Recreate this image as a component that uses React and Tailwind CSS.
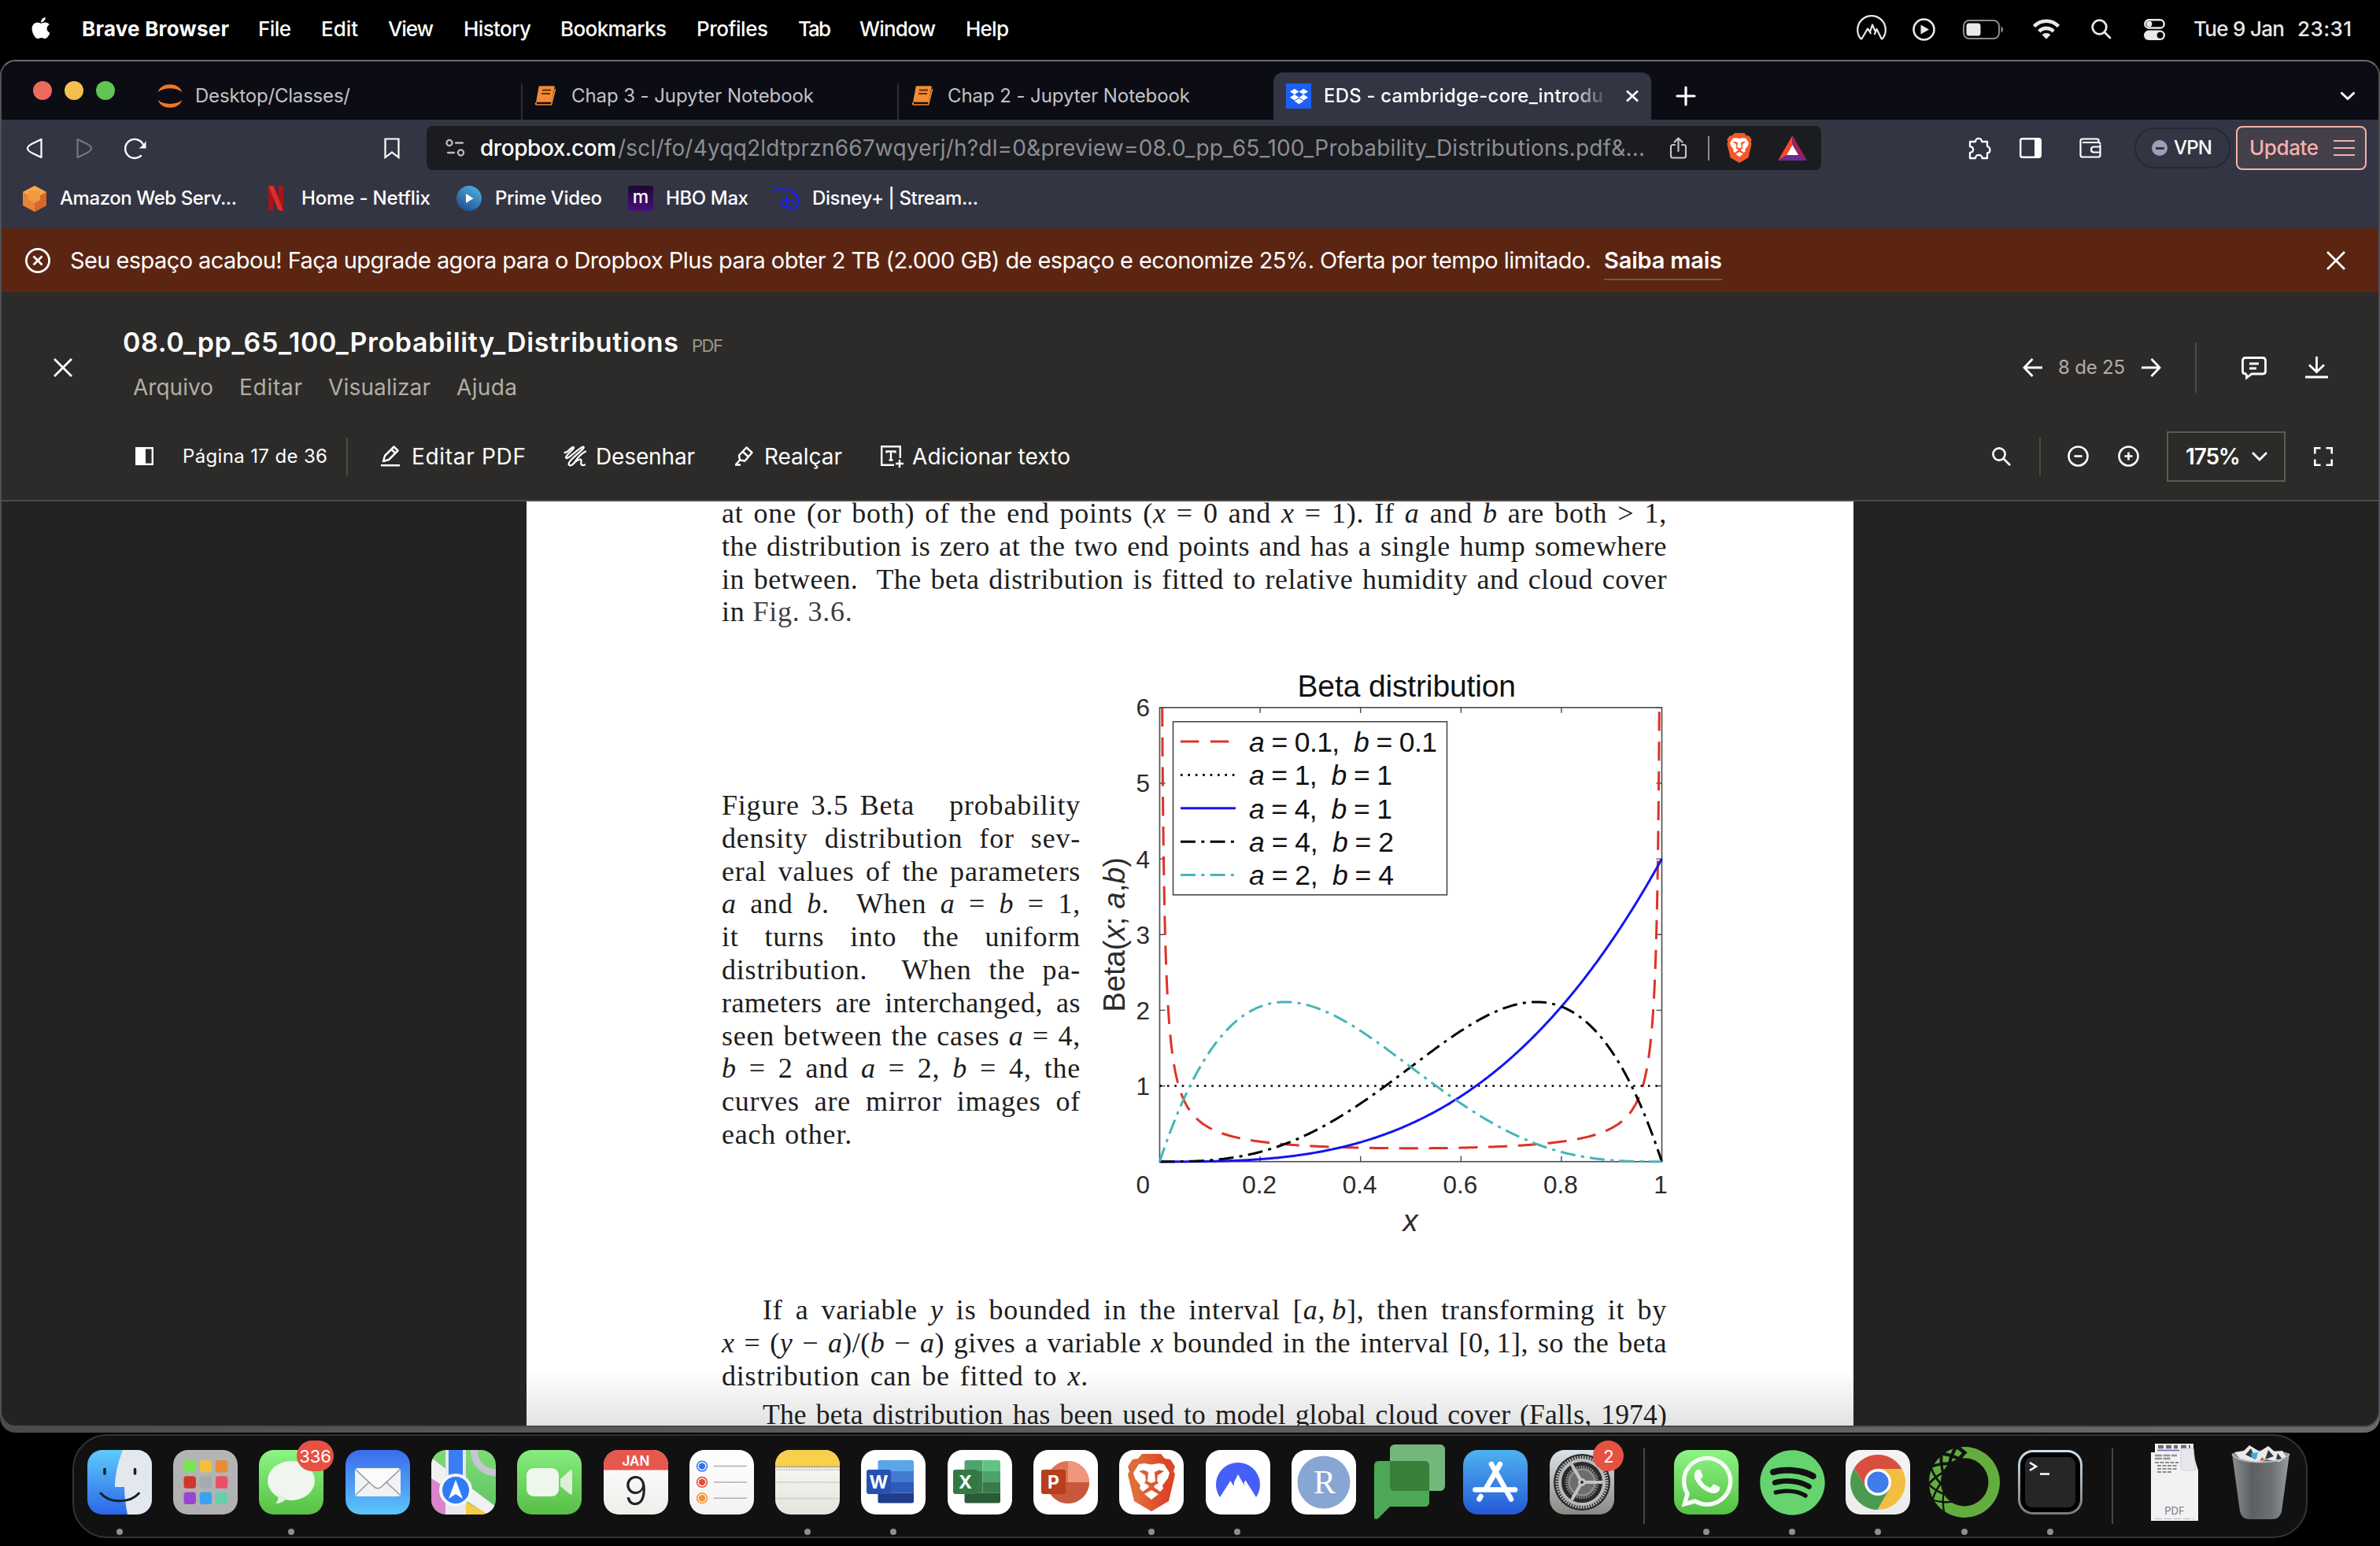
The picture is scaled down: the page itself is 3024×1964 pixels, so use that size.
import React, { useLayoutEffect, useRef } from "react";
import { FaApple, FaDropbox, FaSpotify, FaWhatsapp } from "react-icons/fa";
import { SiAnaconda } from "react-icons/si";

/* Spreads its letters so that the text fills the box it is given. */
function Fit({ className = "", children }) {
  const box = useRef(null);
  const text = useRef(null);
  useLayoutEffect(() => {
    const t = text.current;
    t.style.letterSpacing = "0px";
    const n = Math.max(1, t.textContent.length - 1);
    const gap = (box.current.clientWidth - t.getBoundingClientRect().width) / n;
    t.style.letterSpacing = gap.toFixed(3) + "px";
  }, []);
  return (
    <span ref={box} className={"inline-block shrink-0 whitespace-nowrap " + className}>
      <span ref={text}>{children}</span>
    </span>
  );
}

function Svg({ w, h, className = "", vb, children, ...rest }) {
  return (
    <svg
      width={w}
      height={h}
      viewBox={vb || `0 0 ${w} ${h}`}
      fill="none"
      className={"block shrink-0 overflow-visible " + className}
      {...rest}
    >
      {children}
    </svg>
  );
}

/* ---------- macOS menu bar ---------- */
function MenuBar() {
  return (
    <div className="flex h-[74px] items-center bg-black pl-[38px] text-[26px] leading-none font-medium text-white">
      <FaApple className="mb-[3px] h-[31px] w-[28px] shrink-0" />
      <Fit className="ml-[38px] w-[187px] font-bold">Brave Browser</Fit>
      <Fit className="ml-[37px] w-[42px]">File</Fit>
      <Fit className="ml-[38px] w-[47px]">Edit</Fit>
      <Fit className="ml-[38px] w-[58px]">View</Fit>
      <Fit className="ml-[38px] w-[86px]">History</Fit>
      <Fit className="ml-[37px] w-[135px]">Bookmarks</Fit>
      <Fit className="ml-[38px] w-[91px]">Profiles</Fit>
      <Fit className="ml-[38px] w-[42px]">Tab</Fit>
      <Fit className="ml-[36px] w-[97px]">Window</Fit>
      <Fit className="ml-[38px] w-[55px]">Help</Fit>
      <div className="ml-auto flex items-center pr-[36px] text-[#e9e9e9]">
        <Svg w={38} h={30} stroke="currentColor" strokeWidth="2.2" strokeLinejoin="round">
          <path d="M6 28 A17.8 17.8 0 1 1 32 28" />
          <path d="M6 28 L14 14.5 L17 18.5 L20 9.5 L24 18.5 L25.5 15 L32 28 M17 18.5 L18 21 M24 18.5 L22.5 22" />
        </Svg>
        <Svg w={29} h={29} className="ml-[33px]">
          <circle cx="14.5" cy="14.5" r="13" stroke="currentColor" strokeWidth="2.6" />
          <path d="M10.5 8.5 V20.5 L21 14.5 Z" fill="currentColor" />
        </Svg>
        <Svg w={52} h={25} className="ml-[35px]">
          <rect x="1" y="1" width="45" height="23" rx="7" stroke="#8b8b8b" strokeWidth="2" />
          <rect x="4.5" y="4.5" width="18" height="16" rx="3.5" fill="currentColor" />
          <path d="M48.5 8.5 C52 10 52 15 48.5 16.5 Z" fill="#8b8b8b" />
        </Svg>
        <Svg w={36} h={26} className="ml-[36px]">
          <path d="M2.5 9.5 C11 0.5 25 0.5 33.5 9.5" stroke="currentColor" strokeWidth="4.6" />
          <path d="M8.8 15.8 C14 10.6 22 10.6 27.2 15.8" stroke="currentColor" strokeWidth="4.6" />
          <path d="M12.6 20 C15.5 17.2 20.5 17.2 23.4 20 L18 25.8 Z" fill="currentColor" />
        </Svg>
        <Svg w={26} h={26} className="ml-[39px]" stroke="currentColor" strokeWidth="2.8" strokeLinecap="round">
          <circle cx="10.5" cy="10.5" r="8.8" />
          <path d="M17 17 L24 24" />
        </Svg>
        <Svg w={27} h={27} className="ml-[41px]">
          <rect x="1.3" y="1.3" width="24.4" height="10.2" rx="5.1" stroke="currentColor" strokeWidth="2.4" />
          <circle cx="6.8" cy="6.4" r="3.6" fill="currentColor" />
          <rect x="0" y="14.6" width="27" height="12.4" rx="6.2" fill="currentColor" />
          <circle cx="20.6" cy="20.8" r="4" fill="#000" />
        </Svg>
        <Fit className="ml-[36px] w-[116px]">Tue 9 Jan</Fit>
        <Fit className="ml-[16px] w-[69px]">23:31</Fit>
      </div>
    </div>
  );
}

/* ---------- browser chrome ---------- */
function NotebookIcon({ className }) {
  return (
    <Svg w={28} h={25} className={className}>
      <path d="M6.5 1 H25 L21 20 H3 Z" fill="#f38b35" stroke="#f38b35" strokeWidth="1.6" strokeLinejoin="round" />
      <path d="M10 5.5 H21 M9 10 H20" stroke="#5b3009" strokeWidth="2" />
      <path d="M3 21.6 C1 21.6 1 24 3 24 H21.5 L26.6 4" stroke="#f38b35" strokeWidth="1.6" />
    </Svg>
  );
}

function TabStrip() {
  return (
    <div className="flex h-[74px] items-end bg-[#0c0c14] text-[24px] leading-none text-[#c3c3c6]">
      <div className="mb-[25px] ml-[40px] flex gap-[16px]">
        <div className="size-[24px] rounded-full bg-[#ed6a5e]" />
        <div className="size-[24px] rounded-full bg-[#f5bf4f]" />
        <div className="size-[24px] rounded-full bg-[#61c554]" />
      </div>
      <div className="flex h-[46px] w-[518px] items-center border-r-2 border-[#2c2d37] pb-[15px] pl-[54px] pt-0">
        <Svg w={32} h={30}>
          <path d="M0.5 10 C5 -3 27 -3 31.5 10 C24 3.5 8 3.5 0.5 10 Z" fill="#f37726" />
          <path d="M0.5 20 C5 33 27 33 31.5 20 C24 26.5 8 26.5 0.5 20 Z" fill="#f37726" />
        </Svg>
        <Fit className="ml-[16px] w-[197px]">Desktop/Classes/</Fit>
      </div>
      <div className="flex h-[46px] w-[478px] items-center border-r-2 border-[#2c2d37] pb-[15px] pl-[15px]">
        <NotebookIcon />
        <Fit className="ml-[19px] w-[308px]">Chap 3 - Jupyter Notebook</Fit>
      </div>
      <div className="flex h-[46px] w-[476px] items-center pb-[15px] pl-[16px]">
        <NotebookIcon />
        <Fit className="ml-[18px] w-[308px]">Chap 2 - Jupyter Notebook</Fit>
      </div>
      <div className="flex h-[60px] w-[480px] items-center rounded-t-[12px] bg-[#333543] pl-[16px] text-white">
        <div className="flex size-[32px] items-center justify-center bg-[#1d60f5]">
          <FaDropbox className="size-[23px]" />
        </div>
        <Fit className="ml-[16px] w-[355px] font-medium [mask-image:linear-gradient(to_right,#000_88%,rgba(0,0,0,0.15)_100%)] py-[4px]">
          EDS - cambridge-core_introdu
        </Fit>
        <Svg w={16} h={14} className="ml-[29px]" stroke="#fff" strokeWidth="2.6">
          <path d="M1 0.5 L15 13.5 M15 0.5 L1 13.5" />
        </Svg>
      </div>
      <Svg w={24} h={24} className="mb-[18px] ml-[32px]" stroke="#fff" strokeWidth="3.2" strokeLinecap="round">
        <path d="M12 1 V23 M1 12 H23" />
      </Svg>
      <Svg w={20} h={12} className="mb-[24px] mr-[29px] ml-auto" stroke="#fff" strokeWidth="3">
        <path d="M1.5 1.5 L10 9.5 L18.5 1.5" />
      </Svg>
    </div>
  );
}

function UrlRow() {
  return (
    <div className="flex h-[72px] items-center bg-[#333543] leading-none text-white">
      <Svg w={22} h={27} className="ml-[30px]" stroke="#fff" strokeWidth="2.2" strokeLinejoin="round">
        <path d="M20.5 2 V25 L9 19.5 C1 15.5 1 11.5 9 7.5 Z" />
      </Svg>
      <Svg w={22} h={27} className="ml-[43px]" stroke="#74757e" strokeWidth="2.2" strokeLinejoin="round">
        <path d="M1.5 2 V25 L13 19.5 C21 15.5 21 11.5 13 7.5 Z" />
      </Svg>
      <Svg w={28} h={27} className="ml-[39px]">
        <path d="M21 23 A12 12 0 1 1 24.5 10" stroke="#fff" strokeWidth="2.4" strokeLinecap="round" />
        <path d="M27.5 4 V13.5 H18.5 C21 12 24.5 9 27.5 4 Z" fill="#fff" />
      </Svg>
      <Svg w={20} h={27} className="ml-[302px]" stroke="#fff" strokeWidth="2.2">
        <path d="M1.5 1.5 H18.5 V25 L10 18.5 L1.5 25 Z" />
      </Svg>
      <div className="ml-[34px] flex h-[56px] w-[1772px] items-center rounded-[8px] bg-[#1b1c20] pl-[24px]">
        <Svg w={25} h={24} stroke="#b9babd" strokeWidth="2.3" strokeLinecap="round">
          <circle cx="5" cy="5.5" r="3.6" />
          <path d="M13 5.5 H22" />
          <circle cx="19.5" cy="18" r="3.6" />
          <path d="M3 18 H11" />
        </Svg>
        <Fit className="ml-[19px] w-[173px] text-[28px] font-medium">dropbox.com</Fit>
        <Fit className="ml-[2px] w-[1305px] text-[28px] text-[#8d8e93]">
          /scl/fo/4yqq2ldtprzn667wqyerj/h?dl=0&amp;preview=08.0_pp_65_100_Probability_Distributions.pdf&amp;...
        </Fit>
        <Svg w={21} h={28} className="ml-[32px]" stroke="#c6c6c9" strokeWidth="2.1" strokeLinecap="round" strokeLinejoin="round">
          <path d="M6 10 H3.5 Q1 10 1 12.5 V24 Q1 26.5 3.5 26.5 H17.5 Q20 26.5 20 24 V12.5 Q20 10 17.5 10 H15" />
          <path d="M10.5 18 V1.5 M5.5 6.5 L10.5 1.5 L15.5 6.5" />
        </Svg>
        <div className="ml-[27px] h-[31px] w-[2px] bg-[#8a8b90]" />
        <BraveLion className="ml-[21px]" />
        <Svg w={37} h={32} className="ml-[32px]">
          <path d="M18.5 0 L0 32 L11 25 L18.5 12 Z" fill="#ff4724" />
          <path d="M18.5 0 L37 32 L26 25 L18.5 12 Z" fill="#9e1f63" />
          <path d="M0 32 H37 L26 25 H11 Z" fill="#662d91" />
          <path d="M18.5 12 L11 25 H26 Z" fill="#fff" />
        </Svg>
      </div>
      <Svg w={28} h={29} className="ml-[187px]" stroke="#fff" strokeWidth="2.3" strokeLinejoin="round">
        <path d="M2 6 H9 C9 0.5 17 0.5 17 6 H24 V12 C28.5 13 28.5 20 24 20.5 V27 H17.5 C17.5 21.5 9 21.5 9 27 H2 V20 C7.5 19 7.5 13 2 12 Z" />
      </Svg>
      <Svg w={28} h={26} className="ml-[37px]">
        <rect x="1.2" y="1.2" width="25.6" height="23.6" rx="2.5" stroke="#fff" strokeWidth="2.4" />
        <path d="M19 1 H25.5 Q27 1 27 3 V23 Q27 25 25.5 25 H19 Z" fill="#fff" />
      </Svg>
      <Svg w={28} h={26} className="ml-[48px]" stroke="#fff" strokeWidth="2.2" strokeLinejoin="round">
        <path d="M26.5 9 V22 Q26.5 24.5 24 24.5 H4 Q1.5 24.5 1.5 22 V4 Q1.5 1.5 4 1.5 H22.5 Q24.5 1.5 24.5 3.5 V6 H4" />
        <path d="M24.5 6 Q26.5 6 26.5 8.5" />
        <path d="M26.5 11.5 H18.5 Q15 11.5 15 15 Q15 18.5 18.5 18.5 H26.5" />
      </Svg>
      <div className="ml-[42px] flex h-[52px] w-[122px] items-center rounded-full border-2 border-[#262832] pl-[20px]">
        <div className="flex size-[20px] items-center justify-center rounded-full bg-[#9e9fb5]">
          <div className="h-[3px] w-[11px] bg-[#333543]" />
        </div>
        <Fit className="ml-[8px] w-[49px] text-[24px] font-medium">VPN</Fit>
      </div>
      <div className="ml-[7px] flex h-[56px] w-[166px] items-center rounded-[8px] border-2 border-[#f5b1aa] bg-[#433f4b] pl-[15px] text-[#f5b1aa]">
        <Fit className="w-[88px] text-[26px] font-medium">Update</Fit>
        <div className="ml-[19px] flex w-[27px] flex-col gap-[7px]">
          <div className="h-[2px] bg-[#f5b1aa]" />
          <div className="h-[2px] bg-[#f5b1aa]" />
          <div className="h-[2px] bg-[#f5b1aa]" />
        </div>
      </div>
    </div>
  );
}

function BraveLion({ className }) {
  return (
    <Svg w={34} h={38} vb="0 0 62 73" className={className}>
      <path d="M19 0 H43 L48 6 L55 7 L61 16 L59 22 L61 26 L53 60 L31 73 L9 60 L1 26 L3 22 L1 16 L7 7 L14 6 Z" fill="#f4582a" />
      <LionFace />
    </Svg>
  );
}

function LionFace() {
  return (
    <g>
      <path
        d="M31 13.5 L40 12 L47 13 L54 24 L52 31 L45 40 L46 44 L42 48 L34 42 L35 40 L40 37 L38 34 L39 27 L47 22 L41 20.5 L35 23 L36 35 L31 37 L26 35 L27 23 L21 20.5 L15 22 L23 27 L24 34 L22 37 L27 40 L28 42 L20 48 L16 44 L17 40 L10 31 L8 24 L15 13 L22 12 Z"
        fill="#fff"
      />
      <path d="M31 46 L40 51 L31 58 L22 51 Z" fill="#fff" />
    </g>
  );
}

function BookmarksRow() {
  return (
    <div className="flex h-[66px] items-center bg-[#333543] pb-[10px] pl-[27px] text-[24px] leading-none font-medium text-white">
      <Svg w={30} h={33}>
        <path d="M15 0 L30 8 V25 L15 33 L0 25 V8 Z" fill="#e8833a" />
        <path d="M15 0 L30 8 L15 16 L0 8 Z" fill="#f7a94f" />
        <path d="M15 16 L30 8 V25 L15 33 Z" fill="#d9662c" />
        <path d="M7 6 L22 6 L22 18 L15 22 L7 18 Z" fill="#f2993f" />
      </Svg>
      <Fit className="ml-[17px] w-[225px]">Amazon Web Serv...</Fit>
      <Svg w={19} h={32} className="ml-[40px]">
        <path d="M0 0 H6.5 V32 L0 31 Z M12.5 0 H19 V32 L12.5 31 Z" fill="#a81419" />
        <path d="M0 0 H6.5 L19 32 L12.5 31 Z" fill="#e12b28" />
      </Svg>
      <Fit className="ml-[23px] w-[164px]">Home - Netflix</Fit>
      <Svg w={32} h={32} className="ml-[33px]">
        <defs>
          <linearGradient id="prime" x1="0.8" y1="0" x2="0.2" y2="1">
            <stop offset="0" stopColor="#4fb0e2" />
            <stop offset="1" stopColor="#1c4b8e" />
          </linearGradient>
        </defs>
        <circle cx="16" cy="16" r="16" fill="url(#prime)" />
        <path d="M12 10 V22 L21.5 16 Z" fill="#fff" />
      </Svg>
      <Fit className="ml-[17px] w-[136px]">Prime Video</Fit>
      <div className="ml-[33px] flex size-[32px] items-center justify-center rounded-[3px] bg-linear-to-b from-[#1c0833] to-[#48107a] pb-[3px] text-[23px] font-medium">
        m
      </div>
      <Fit className="ml-[16px] w-[105px]">HBO Max</Fit>
      <Svg w={34} h={28} className="ml-[32px]" stroke="#1f22e6" strokeLinecap="round">
        <path d="M2 5 C5 -1 18 0 27 8 C35 16 33 27 22 26 C12 26 6 20 12 17 C17 15 24 16 27 19" strokeWidth="2.6" />
        <path d="M17 10 C16 15 16 21 17.5 26" strokeWidth="2.8" />
      </Svg>
      <Fit className="ml-[15px] w-[211px]">Disney+ | Stream...</Fit>
    </div>
  );
}

/* ---------- Dropbox viewer ---------- */
function Banner() {
  return (
    <div className="flex h-[81px] items-center bg-[#5b2512] pl-[30px] text-[29px] leading-none text-white">
      <Svg w={32} h={32} stroke="#fff" strokeWidth="2.8">
        <circle cx="16" cy="16" r="14.6" />
        <path d="M10.5 10.5 L21.5 21.5 M21.5 10.5 L10.5 21.5" />
      </Svg>
      <Fit className="ml-[25px] w-[1933px]">
        Seu espaço acabou! Faça upgrade agora para o Dropbox Plus para obter 2 TB (2.000 GB) de espaço e economize 25%. Oferta por tempo limitado.
      </Fit>
      <div className="mt-[4px] ml-[16px] flex h-[46px] items-center border-b-2 border-[#6d5a52] pb-[2px]">
        <Fit className="w-[150px] font-semibold">Saiba mais</Fit>
      </div>
      <Svg w={24} h={24} className="mr-[42px] ml-auto" stroke="#fff" strokeWidth="2.8">
        <path d="M1 1 L23 23 M23 1 L1 23" />
      </Svg>
    </div>
  );
}

function ViewerHeader() {
  return (
    <div className="flex h-[162px] items-start bg-[#2c2b29] leading-none text-white">
      <Svg w={24} h={24} className="mt-[84px] ml-[66px]" stroke="#fff" strokeWidth="2.8">
        <path d="M1 1 L23 23 M23 1 L1 23" />
      </Svg>
      <div className="ml-[64px] flex flex-col">
        <div className="mt-[48px] flex h-[32px] items-center">
          <Fit className="w-[706px] text-[34px] font-semibold">08.0_pp_65_100_Probability_Distributions</Fit>
          <Fit className="mt-[7px] ml-[17px] w-[40px] text-[22px] text-[#9b978f]">PDF</Fit>
        </div>
        <div className="mt-[25px] flex h-[32px] items-center pl-[13px] text-[28px] text-[#b3aea5]">
          <Fit className="w-[102px]">Arquivo</Fit>
          <Fit className="ml-[33px] w-[80px]">Editar</Fit>
          <Fit className="ml-[33px] w-[130px]">Visualizar</Fit>
          <Fit className="ml-[33px] w-[77px]">Ajuda</Fit>
        </div>
      </div>
      <div className="mt-[64px] mr-[64px] ml-auto flex h-[64px] items-center">
        <Svg w={25} h={24} stroke="#fff" strokeWidth="2.8">
          <path d="M2 12 H25 M12.5 1 L2 12 L12.5 23" />
        </Svg>
        <Fit className="ml-[20px] w-[85px] text-[24px] text-[#b3aea5]">8 de 25</Fit>
        <Svg w={25} h={24} className="ml-[21px]" stroke="#fff" strokeWidth="2.8">
          <path d="M0 12 H23 M12.5 1 L23 12 L12.5 23" />
        </Svg>
        <div className="ml-[43px] h-[64px] w-[2px] bg-[#4c4b48]" />
        <Svg w={32} h={28} className="ml-[57px]" stroke="#fff" strokeWidth="2.8">
          <path d="M6.5 22.5 V27 L13 22 H27 Q30.5 22 30.5 18.5 V5 Q30.5 1.5 27 1.5 H5 Q1.5 1.5 1.5 5 V18.5 Q1.5 22 5 22 H6.5" />
          <path d="M10 9 H22 M10 15 H19" />
        </Svg>
        <Svg w={29} h={28} className="ml-[49px]" stroke="#fff" strokeWidth="2.8">
          <path d="M14.5 0 V19 M5 10.5 L14.5 19.5 L24 10.5 M0 26 H29" />
        </Svg>
      </div>
    </div>
  );
}

function ViewerToolbar() {
  return (
    <div className="flex h-[104px] items-center border-b-2 border-[#4c4b49] bg-[#2c2b29] pb-[9px] pl-[170px] text-[28px] leading-none text-white">
      <Svg w={23} h={23}>
        <rect x="1.2" y="1.2" width="20.6" height="20.6" stroke="#fff" strokeWidth="2.4" />
        <rect x="1" y="1" width="12" height="21" fill="#fff" />
      </Svg>
      <Fit className="ml-[37px] w-[184px] text-[24px]">Página 17 de 36</Fit>
      <div className="ml-[24px] h-[48px] w-[2px] bg-[#4c4b48]" />
      <Svg w={24} h={27} className="ml-[42px]" stroke="#fff" strokeWidth="2.5" strokeLinejoin="round">
        <path d="M3 20 L5 13 L16.5 1.5 L21.5 6.5 L10 18 Z M13.5 5 L18 9.5" />
        <path d="M0 25.2 H24" />
      </Svg>
      <Fit className="ml-[15px] w-[145px]">Editar PDF</Fit>
      <Svg w={29} h={28} className="ml-[48px]" stroke="#fff" strokeWidth="2.3" strokeLinejoin="round" strokeLinecap="round">
        <path d="M1.5 9 C6 9 8.5 2.5 12.5 2 C16 3 2.5 12 3 15.5 C5 19 17 4.5 25 1.5 C30 3 6 18 6.5 23.5 C8 27.5 12 24 14 21.5" />
        <path d="M14 21.5 C18 15 22 10.5 28 7.5 M14 21.5 C18 17.5 23.5 16 22.5 20 C21.5 24 22.5 26 27 24.5" />
      </Svg>
      <Fit className="ml-[12px] w-[126px]">Desenhar</Fit>
      <Svg w={24} h={25} className="ml-[50px]" stroke="#fff" strokeWidth="2.4" strokeLinejoin="round">
        <path d="M7 17.5 L6 11.5 L15.5 1.5 L22.5 8 L13.5 18.5 L7 17.5 L2 23 M10.5 6.5 L18 13.5 M1 23.5 H8" />
      </Svg>
      <Fit className="ml-[14px] w-[99px]">Realçar</Fit>
      <Svg w={28} h={28} className="ml-[49px]" stroke="#fff" strokeWidth="2.4">
        <path d="M17 24.8 H1.2 V1.2 H24.8 V16" />
        <path d="M7.5 9.5 V7.5 H18.5 V9.5 M13 7.5 V18.5 M10.5 18.5 H15.5" />
        <path d="M24 18 V28 M19 23 H29" />
      </Svg>
      <Fit className="ml-[12px] w-[201px]">Adicionar texto</Fit>
      <div className="mr-[58px] ml-auto flex items-center">
        <Svg w={24} h={24} stroke="#fff" strokeWidth="2.6">
          <circle cx="9" cy="9" r="7.6" />
          <path d="M14.5 14.5 L23 23" />
        </Svg>
        <div className="ml-[36px] h-[48px] w-[2px] bg-[#4c4b48]" />
        <Svg w={27} h={27} className="ml-[34px]" stroke="#fff" strokeWidth="2.6">
          <circle cx="13.5" cy="13.5" r="12" />
          <path d="M8.5 13.5 H18.5" />
        </Svg>
        <Svg w={27} h={27} className="ml-[37px]" stroke="#fff" strokeWidth="2.6">
          <circle cx="13.5" cy="13.5" r="12" />
          <path d="M8.5 13.5 H18.5 M13.5 8.5 V18.5" />
        </Svg>
        <div className="ml-[35px] flex h-[64px] w-[151px] items-center border-2 border-[#5c5a55] pl-[22px]">
          <Fit className="w-[70px] text-[28px] font-semibold">175%</Fit>
          <Svg w={20} h={12} className="ml-[14px]" stroke="#fff" strokeWidth="2.8">
            <path d="M1 1 L10 10 L19 1" />
          </Svg>
        </div>
        <Svg w={24} h={24} className="ml-[36px]" stroke="#fff" strokeWidth="2.6">
          <path d="M1.3 8.5 V1.3 H8.5 M15.5 1.3 H22.7 V8.5 M22.7 15.5 V22.7 H15.5 M8.5 22.7 H1.3 V15.5" />
        </Svg>
      </div>
    </div>
  );
}

/* ---------- PDF page ---------- */
function Line({ children, tight, className = "" }) {
  return (
    <p
      className={
        "h-[41.8px] leading-[41.8px] whitespace-nowrap [text-align-last:justify] " +
        (tight ? "tracking-[0.45px] " : "tracking-[0.8px] ") +
        className
      }
    >
      {children}
    </p>
  );
}

const X0 = 83.5;
const X1 = 721.5;
const Y0 = 615.7;
const TOP = 38.8;
const UNIT = 96.15;

function curve(fn, from = 0, to = 1, n = 400) {
  let d = "";
  for (let i = 0; i <= n; i++) {
    const t = i / n;
    const s = from + (to - from) * (0.5 - 0.5 * Math.cos(Math.PI * t));
    d += (i ? "L" : "M") + (X0 + s * (X1 - X0)).toFixed(2) + " " + (Y0 - fn(s) * UNIT).toFixed(2);
  }
  return d;
}

const DASH_DOT = "19 7.3 4 7.3";
const LEGEND = [
  { a: "0.1", b: "0.1", color: "#dd3326", dash: "23.4 14.4", w: 239 },
  { a: "1", b: "1", color: "#000", dash: "2.6 6.8", w: 182 },
  { a: "4", b: "1", color: "#1414f5", w: 182 },
  { a: "4", b: "2", color: "#000", dash: DASH_DOT, w: 184 },
  { a: "2", b: "4", color: "#46b5b9", dash: DASH_DOT, w: 184 },
];

function BetaChart() {
  const ticksX = [0.2, 0.4, 0.6, 0.8];
  const ticksY = [1, 2, 3, 4, 5, 6];
  return (
    <svg
      width="750"
      height="740"
      viewBox="0 0 750 740"
      fill="none"
      className="block shrink-0 overflow-visible [font-family:'Liberation_Sans',Arial,sans-serif]"
    >
      <text x="258.5" y="24.7" fontSize="39" textLength="277.5" fill="#111">Beta distribution</text>
      <rect x={X0} y={TOP} width={X1 - X0} height={Y0 - TOP} stroke="#4a4a4a" strokeWidth="1.6" />
      {ticksX.map((v) => {
        const x = X0 + v * (X1 - X0);
        return (
          <g key={v}>
            <path d={`M${x} ${Y0} v-7 M${x} ${TOP} v7`} stroke="#4a4a4a" strokeWidth="1.4" />
            <text x={x - 1} y="655.6" fontSize="31.5" textAnchor="middle" fill="#2b2b2b">{v}</text>
          </g>
        );
      })}
      {ticksY.map((v) => {
        const y = Y0 - v * UNIT;
        return (
          <g key={v}>
            <path d={`M${X0} ${y} h7 M${X1} ${y} h-7`} stroke="#4a4a4a" strokeWidth="1.4" />
            <text x="71" y={y + 11.5} fontSize="31.5" textAnchor="end" fill="#2b2b2b">{v}</text>
          </g>
        );
      })}
      <text x="71" y="655.6" fontSize="31.5" textAnchor="end" fill="#2b2b2b">0</text>
      <text x="720" y="655.6" fontSize="31.5" textAnchor="middle" fill="#2b2b2b">1</text>
      <text x="402" y="703.5" fontSize="38" fontStyle="italic" textAnchor="middle" fill="#2b2b2b">x</text>
      <text transform="translate(39 327.2) rotate(-90)" fontSize="38" textAnchor="middle" fill="#2b2b2b">
        Beta(<tspan fontStyle="italic">x</tspan>; <tspan fontStyle="italic">a</tspan>,<tspan fontStyle="italic">b</tspan>)
      </text>
      <path d={curve((x) => 0.05072 * Math.pow(x * (1 - x), -0.9), 0.005, 0.995)} stroke="#dd3326" strokeWidth="3" strokeDasharray="24.2 13.6" />
      <path d={`M${X0} ${Y0 - UNIT} H${X1}`} stroke="#000" strokeWidth="2.6" strokeDasharray="2.6 6.8" />
      <path d={curve((x) => 4 * x * x * x)} stroke="#1414f5" strokeWidth="3" />
      <path d={curve((x) => 20 * x * x * x * (1 - x))} stroke="#000" strokeWidth="3" strokeDasharray={DASH_DOT} />
      <path d={curve((x) => 20 * x * Math.pow(1 - x, 3))} stroke="#46b5b9" strokeWidth="3" strokeDasharray={DASH_DOT} />
      <rect x="100.5" y="56.8" width="348" height="220" fill="#fff" stroke="#4a4a4a" strokeWidth="1.6" />
      {LEGEND.map((l, i) => (
        <g key={i}>
          <path d={`M110 ${82 + i * 42.4} h70`} stroke={l.color} strokeWidth="3" strokeDasharray={l.dash} />
          <text x="197" y={94.8 + i * 42.4} fontSize="35.5" textLength={l.w} fill="#111" xmlSpace="preserve" className="whitespace-pre">
            <tspan fontStyle="italic">a</tspan>{` = ${l.a},  `}<tspan fontStyle="italic">b</tspan>{` = ${l.b}`}
          </text>
        </g>
      ))}
    </svg>
  );
}

function PdfPage() {
  return (
    <div className="ml-[667px] h-[1175px] w-[1686px] overflow-hidden bg-linear-to-b from-white from-94% to-[#e2e2e3] pl-[248px] text-[36px] text-[#1d1d1d] [font-family:'Liberation_Serif','Times_New_Roman',serif]">
      <div className="mt-[-5px] w-[1201px]">
        <Line>at one (or both) of the end points (<i>x</i> = 0 and <i>x</i> = 1). If <i>a</i> and <i>b</i> are both &gt; 1,</Line>
        <Line tight>the distribution is zero at the two end points and has a single hump somewhere</Line>
        <Line tight>in between.&nbsp; The beta distribution is fitted to relative humidity and cloud cover</Line>
        <Line className="w-[163px]">in <span className="text-[#3d3d3d]">Fig. 3.6.</span></Line>
      </div>
      <div className="mt-[60.8px] flex">
        <div className="w-[456px] shrink-0 pt-[143px]">
          <Line>Figure 3.5 Beta &nbsp; probability</Line>
          <Line>density distribution for sev-</Line>
          <Line>eral values of the parameters</Line>
          <Line><i>a</i> and <i>b</i>.&nbsp; When <i>a</i> = <i>b</i> = 1,</Line>
          <Line>it turns into the uniform</Line>
          <Line>distribution.&nbsp; When the pa-</Line>
          <Line tight>rameters are interchanged, as</Line>
          <Line>seen between the cases <i>a</i> = 4,</Line>
          <Line><i>b</i> = 2 and <i>a</i> = 2, <i>b</i> = 4, the</Line>
          <Line>curves are mirror images of</Line>
          <Line className="w-[166px]">each other.</Line>
        </div>
        <div className="ml-[17px]">
          <BetaChart />
        </div>
      </div>
      <div className="mt-[44.5px] w-[1201px]">
        <Line className="pl-[52px]">If a variable <i>y</i> is bounded in the interval [<i>a</i>,&#8201;<i>b</i>], then transforming it by</Line>
        <Line tight><i>x</i> = (<i>y</i> − <i>a</i>)/(<i>b</i> − <i>a</i>) gives a variable <i>x</i> bounded in the interval [0,&#8201;1], so the beta</Line>
        <Line className="w-[466px]">distribution can be fitted to <i>x</i>.</Line>
        <Line className="mt-[7.3px] pl-[52px] text-[35.5px] tracking-[0.2px]!">The beta distribution has been used to model global cloud cover (Falls, 1974)</Line>
      </div>
    </div>
  );
}

/* ---------- Dock ---------- */
function Grad({ id, from, to, x2 = 0, y2 = 1 }) {
  return (
    <linearGradient id={id} x1="0" y1="0" x2={x2} y2={y2}>
      <stop offset="0" stopColor={from} />
      <stop offset="1" stopColor={to} />
    </linearGradient>
  );
}

function Tile({ id, from = "#fff", to = "#fff", children }) {
  return (
    <Svg w={82} h={82}>
      <defs>
        <Grad id={id} from={from} to={to} />
        <clipPath id={id + "-clip"}>
          <rect width="82" height="82" rx="19" />
        </clipPath>
      </defs>
      <g clipPath={`url(#${id}-clip)`}>
        <rect width="82" height="82" fill={`url(#${id})`} />
        {children}
      </g>
    </Svg>
  );
}

const Finder = () => (
  <Tile id="finder" from="#5ecbfa" to="#2c66ea">
    <path d="M45 0 C38 18 35 34 35 47 H47 C47 60 49 72 51 82 H82 V0 Z" fill="#e3e8ef" />
    <path d="M22 24.5 V30 M60.5 24.5 V30" stroke="#16202c" strokeWidth="3.6" strokeLinecap="round" />
    <path d="M17 55 C28 68 54 68 65.5 55" stroke="#16202c" strokeWidth="3" strokeLinecap="round" />
  </Tile>
);

const PADS = ["#77e653", "#f5c03c", "#e88d35", "#d2362b", "#a3aab0", "#ec4f66", "#9a45cf", "#38a3f5", "#66cfa8"];
const Launchpad = () => (
  <Tile id="launchpad" from="#b5b5b6" to="#b1b1b1">
    {PADS.map((c, i) => (
      <rect key={c} x={13.5 + (i % 3) * 20.2} y={13 + Math.floor(i / 3) * 20.2} width="15.4" height="15.6" rx="3.5" fill={c} />
    ))}
  </Tile>
);

const Messages = () => (
  <Tile id="messages" from="#8cf584" to="#58c044">
    <ellipse cx="41" cy="39" rx="30" ry="25" fill="#eef6ed" />
    <path d="M24 56 C25 62 24 65 21 68 C28 68 33 65 35 61 Z" fill="#e2f1df" />
  </Tile>
);

const Mail = () => (
  <Tile id="mail" from="#3a6ced" to="#5cc5fb">
    <rect x="12" y="23" width="58" height="36" rx="4" fill="#f1f2f3" />
    <path d="M13 57 L31 40 M69 57 L51 40" stroke="#8f979f" strokeWidth="1.4" />
    <path d="M13 25 L36 46.5 Q41 51 46 46.5 L69 25" stroke="#8f979f" strokeWidth="1.6" fill="#fbfbfb" />
  </Tile>
);

const Maps = () => (
  <Tile id="maps" from="#7ddb76" to="#5fc463">
    <path d="M0 36 L20 50 V82 H0 Z" fill="#dc83cb" />
    <path d="M44 82 V66 L74 82 Z" fill="#f7cb45" />
    <path d="M0 10 L82 72 V82 H72 L0 36 Z" fill="#f1f1f4" />
    <path d="M44 82 V66 L72 82 Z" fill="#f7cb45" />
    <path d="M18 0 H44 V82 H18 Z" fill="#e8e8ed" />
    <path d="M22 0 H40 V50 H22 Z" fill="#3b7df3" />
    <path d="M54 0 C55 18 66 28 82 29" stroke="#c4c6d0" strokeWidth="9" />
    <circle cx="31" cy="51" r="19" fill="#2f7bf6" stroke="#f4f5f8" strokeWidth="4" />
    <path d="M31 38 L40 62 L31 56 L22 62 Z" fill="#fff" />
  </Tile>
);

const FaceTime = () => (
  <Tile id="facetime" from="#86ec7f" to="#57bf46">
    <rect x="12" y="23" width="41" height="36" rx="9" fill="#edf7ec" />
    <path d="M55 37 L67 26 Q70 24 70 28 V54 Q70 58 67 56 L55 46 Z" fill="#dcefd9" />
  </Tile>
);

const Calendar = () => (
  <Tile id="calendar" from="#fff" to="#efeeeb">
    <rect width="82" height="25.5" fill="#e6574e" />
    <text x="41" y="20" fontSize="17" fontWeight="600" textAnchor="middle" fill="#fff">JAN</text>
    <text x="41" y="70" fontSize="50" fontWeight="300" textAnchor="middle" fill="#222">9</text>
  </Tile>
);

const Reminders = () => (
  <Tile id="reminders" from="#fff" to="#f3f2f0">
    {["#2f74f2", "#e5483b", "#ee962f"].map((c, i) => (
      <g key={c}>
        <circle cx="16" cy={20.6 + i * 20.3} r="6.4" stroke={c} strokeWidth="1.5" />
        <circle cx="16" cy={20.6 + i * 20.3} r="4.2" fill={c} />
        <path d={`M31 ${20.6 + i * 20.3} H73`} stroke="#b0b0b6" strokeWidth="1.5" />
      </g>
    ))}
  </Tile>
);

const Notes = () => (
  <Tile id="notes" from="#fcfbf8" to="#e4e4dd">
    <rect width="82" height="21" fill="#f8d04e" />
    <path d="M0 21.5 H82" stroke="#a89f83" strokeWidth="1.6" />
    <path d="M1 25 H82" stroke="#b9b9b5" strokeWidth="1.8" strokeDasharray="1.5 1.7" />
    <path d="M0 41 H82 M0 61.5 H82" stroke="#cfcfcc" strokeWidth="1.4" />
  </Tile>
);

function Letter({ x = 7, fill, children }) {
  return (
    <g>
      <rect x={x} y="25" width="31" height="31" rx="3" fill={fill} />
      <text x={x + 15.5} y="48.8" fontSize="23" fontWeight="700" textAnchor="middle" fill="#fff">{children}</text>
    </g>
  );
}

const Word = () => (
  <Tile id="word">
    <path d="M21.5 27 V15.5 Q21.5 13 24 13 H64.5 Q67 13 67 15.5 V27 Z" fill="#5ba5ea" />
    <rect x="21.5" y="27" width="45.5" height="14" fill="#447bd0" />
    <rect x="21.5" y="41" width="45.5" height="13.5" fill="#2c5bbb" />
    <path d="M21.5 54.5 H67 V65 Q67 67.5 64.5 67.5 H24 Q21.5 67.5 21.5 65 Z" fill="#1f3e8a" />
    <Letter fill="#2652b2">W</Letter>
  </Tile>
);

const Excel = () => (
  <Tile id="excel">
    <path d="M21.5 27 V15.5 Q21.5 13 24 13 H44.5 V27 Z" fill="#4ea36c" />
    <path d="M44.5 13 H64.5 Q67 13 67 15.5 V27 H44.5 Z" fill="#62c387" />
    <path d="M21.5 27 H44.5 V54.5 H21.5 Z" fill="#387b49" />
    <path d="M44.5 27 H67 V41 H44.5 Z" fill="#4ea36c" />
    <path d="M44.5 41 H67 V54.5 H44.5 Z" fill="#387b49" />
    <path d="M21.5 54.5 H67 V65 Q67 67.5 64.5 67.5 H24 Q21.5 67.5 21.5 65 Z" fill="#2b5a38" />
    <Letter fill="#337a42">X</Letter>
  </Tile>
);

const PowerPoint = () => (
  <Tile id="ppt">
    <circle cx="44" cy="41" r="27" fill="#dd7453" />
    <path d="M44 14 A27 27 0 0 1 71 41 H44 Z" fill="#f0967a" />
    <path d="M71 41 A27 27 0 0 1 17 41 Z" fill="#c6593b" />
    <Letter x={10} fill="#b83e1d">P</Letter>
  </Tile>
);

const Brave = () => (
  <Tile id="brave">
    <defs>
      <linearGradient id="lion" x1="0" x2="1">
        <stop offset="0.2" stopColor="#e06d39" />
        <stop offset="0.8" stopColor="#dc4526" />
      </linearGradient>
    </defs>
    <g transform="translate(10 5)">
      <path d="M19 0 H43 L48 6 L55 7 L61 16 L59 22 L61 26 L53 60 L31 73 L9 60 L1 26 L3 22 L1 16 L7 7 L14 6 Z" fill="url(#lion)" strokeLinejoin="round" />
      <LionFace />
    </g>
  </Tile>
);

const Nord = () => (
  <Tile id="nord">
    <path d="M18 60 A28 28 0 1 1 64 60 L50.5 38.5 L48.5 42 L49.5 46 L41 31 L36 41 L35.5 46 L33 42 L31.5 39 Z" fill="#465ff6" />
  </Tile>
);

const RStudio = () => (
  <Tile id="rstudio">
    <circle cx="41" cy="41" r="33.5" fill="#87a6d3" />
    <text x="42" y="54.5" fontSize="42" textAnchor="middle" fill="#fff" fontFamily="Liberation Serif, serif">R</text>
  </Tile>
);

const Chat = () => (
  <Svg w={82} h={82}>
    <rect x="16" y="-7" width="70" height="59" rx="6" fill="#73b77a" />
    <path d="M2 14 H60 Q66 14 66 20 V66 Q66 72 60 72 H16 L1 87 Q-4 90 -4 84 V20 Q-4 14 2 14 Z" fill="#4ca854" />
    <path d="M16 14 H60 Q66 14 66 20 V52 H22 Q16 52 16 46 Z" fill="#39803a" />
  </Svg>
);

const AppStore = () => (
  <Tile id="appstore" from="#4db3f0" to="#2559d6">
    <g stroke="#fff" strokeWidth="6.6" strokeLinecap="round">
      <path d="M47 18 L29 49 M22.5 59 L20.5 62.5" />
      <path d="M36 18 L61 62.5" />
      <path d="M15.5 50.5 H66" />
    </g>
  </Tile>
);

const Settings = () => (
  <Tile id="settings" from="#dbe3e9" to="#8b8883">
    <circle cx="41" cy="41" r="36" fill="#2a2a2b" />
    <circle cx="41" cy="41" r="31.5" stroke="#b9babb" strokeWidth="4.4" strokeDasharray="1.8 1.5" />
    <circle cx="41" cy="41" r="28" stroke="#b9babb" strokeWidth="4" />
    <circle cx="41" cy="41" r="19.5" stroke="#8f9091" strokeWidth="3.4" strokeDasharray="1.6 1.4" />
    <circle cx="41" cy="41" r="16.5" fill="#6c6d6e" stroke="#8f9091" strokeWidth="2.6" />
    <path d="M41 41 H67 M41 41 L28 18.5 M41 41 L28 63.5" stroke="#c3c4c5" strokeWidth="4" />
    <circle cx="41" cy="41" r="5" fill="#c3c4c5" />
    <circle cx="41" cy="41" r="2" fill="#333" />
  </Tile>
);

const WhatsApp = () => (
  <Tile id="whatsapp" from="#8cf584" to="#56bf45">
    <FaWhatsapp x="5" y="3" size="74" color="#f6fbf5" />
  </Tile>
);

const Chrome = () => (
  <Tile id="chrome" from="#f4f4f4" to="#ececec">
    <path d="M11 23 A35 35 0 0 1 71.6 24 L41 24 L26.3 49.5 Z" fill="#d94f3f" />
    <path d="M71.6 24 A35 35 0 0 1 40.4 76 L55.7 49.5 L41 24 Z" fill="#f3bd42" />
    <path d="M40.4 76 A35 35 0 0 1 11 23 L26.3 49.5 L55.7 49.5 Z" fill="#4a9a52" />
    <circle cx="41" cy="41" r="17" fill="#fff" />
    <circle cx="41" cy="41" r="13.6" fill="#3f7de8" />
  </Tile>
);

const Terminal = () => (
  <Tile id="terminal" from="#cfe0ec" to="#77787a">
    <rect x="3" y="3" width="76" height="76" rx="16" fill="#000" />
    <rect x="9" y="9" width="64" height="64" rx="9" fill="#262626" />
    <path d="M15 16 L23 21 L15 26" stroke="#fff" strokeWidth="2.6" />
    <path d="M28 30.5 H40" stroke="#fff" strokeWidth="2.4" />
  </Tile>
);

const PdfFile = () => (
  <Svg w={60} h={98}>
    <path d="M5 0 H54 V14 L60 34 V98 H0 V11 H5 Z" fill="#f2f2f3" />
    <path d="M9 4 H34 M38 4 H50" stroke="#6b6b70" strokeWidth="4.5" strokeDasharray="7 3" />
    <path d="M8 8.5 H36" stroke="#6a63b5" strokeWidth="1.6" />
    <path d="M5 15 H33 M5 19 H26" stroke="#94949a" strokeWidth="2.4" strokeDasharray="9 1.5" />
    <path d="M5 24 H35 M8 28 H33 M8 32 H33 M8 36 H26" stroke="#8b8b90" strokeWidth="2" strokeDasharray="5 1.5" />
    <path d="M38 6 H54 L57 34 H44 Q38 34 38 28 Z" fill="#e7e7ee" stroke="#c8c8ce" strokeWidth="0.8" />
    <text x="30" y="90" fontSize="13" textAnchor="middle" fill="#77777a">PDF</text>
    <path d="M5 95.5 H55" stroke="#b6b6b9" strokeWidth="1" strokeDasharray="9 3" />
  </Svg>
);

const Trash = () => (
  <Svg w={73} h={95}>
    <defs>
      <linearGradient id="bin" x1="0" x2="1">
        <stop offset="0" stopColor="#8b8f92" />
        <stop offset="0.35" stopColor="#5b5f62" />
        <stop offset="0.7" stopColor="#6d7174" />
        <stop offset="1" stopColor="#999c9e" />
      </linearGradient>
    </defs>
    <path d="M0 11 C6 5 67 5 73 11 L63 84 Q61 94 50 94 H23 Q12 94 10 84 Z" fill="url(#bin)" />
    <path d="M3 9 L15 7 L22 0 L35 8 L46 1 L54 8 L64 7 L69 15 L60 21 L44 18 L36 22 L22 20 L10 17 Z" fill="#e9e9ea" />
    <path d="M17 12 L24 4 L30 18 Z M42 18 L46 6 L53 14 Z M58 10 L64 18 L56 18 Z" fill="#33363a" />
    <path d="M24 10 L33 9 L31 17 L25 16 Z" fill="#37aee0" />
    <path d="M38 15 L42 19 L35 20 Z" fill="#c7632c" />
    <path d="M0 11 C8 25 65 25 73 11" stroke="#b9bcbe" strokeWidth="1.6" />
  </Svg>
);

function DockItem({ dot, badge, children }) {
  return (
    <div className="relative flex h-full w-[109.3px] shrink-0 items-center justify-center pb-[10px]">
      {children}
      {badge && (
        <div className="absolute top-[6px] right-[1px] flex h-[39px] min-w-[39px] items-center justify-center rounded-full bg-[#e65142] px-[3px] text-[22px] leading-none text-white">
          {badge}
        </div>
      )}
      {dot && <div className="absolute bottom-[2px] left-[50.5px] size-[8px] rounded-full bg-[#8f8f8f]" />}
    </div>
  );
}

function DockRule() {
  return (
    <div className="flex w-[48.7px] shrink-0 justify-center">
      <div className="h-[96px] w-[2px] bg-[#474747]" />
    </div>
  );
}

function Dock() {
  return (
    <div className="ml-[92px] flex h-[132px] w-[2840px] items-center justify-center rounded-[44px] border-2 border-[#343434] bg-[#111]">
      <DockItem dot><Finder /></DockItem>
      <DockItem><Launchpad /></DockItem>
      <DockItem dot badge="336"><Messages /></DockItem>
      <DockItem><Mail /></DockItem>
      <DockItem><Maps /></DockItem>
      <DockItem><FaceTime /></DockItem>
      <DockItem><Calendar /></DockItem>
      <DockItem><Reminders /></DockItem>
      <DockItem dot><Notes /></DockItem>
      <DockItem dot><Word /></DockItem>
      <DockItem><Excel /></DockItem>
      <DockItem><PowerPoint /></DockItem>
      <DockItem dot><Brave /></DockItem>
      <DockItem dot><Nord /></DockItem>
      <DockItem><RStudio /></DockItem>
      <DockItem><Chat /></DockItem>
      <DockItem><AppStore /></DockItem>
      <DockItem badge="2"><Settings /></DockItem>
      <DockRule />
      <DockItem dot><WhatsApp /></DockItem>
      <DockItem dot><FaSpotify className="size-[85px] text-[#65d46e]" /></DockItem>
      <DockItem dot><Chrome /></DockItem>
      <DockItem dot><SiAnaconda className="size-[90px] text-[#62ad3e]" /></DockItem>
      <DockItem dot><Terminal /></DockItem>
      <DockRule />
      <DockItem><PdfFile /></DockItem>
      <DockItem><Trash /></DockItem>
    </div>
  );
}

export default function App() {
  return (
    <div className="flex h-[1964px] w-[3024px] flex-col overflow-hidden bg-black [font-family:Inter,'Noto_Sans',sans-serif]">
      <MenuBar />
      <div className="mt-[2px] h-[1744px] rounded-[20px] bg-linear-to-r from-[#4a4a4a] via-[#555] via-15% to-[#6a6a6a]">
        <div className="h-[1737px] overflow-hidden rounded-[20px] border-2 border-[#504f54] border-t-[#6b6a72] border-b-[#4b4a49] bg-[#242321]">
          <TabStrip />
          <UrlRow />
          <BookmarksRow />
          <Banner />
          <ViewerHeader />
          <ViewerToolbar />
          <PdfPage />
        </div>
      </div>
      <div className="mt-[2px]">
        <Dock />
      </div>
    </div>
  );
}
